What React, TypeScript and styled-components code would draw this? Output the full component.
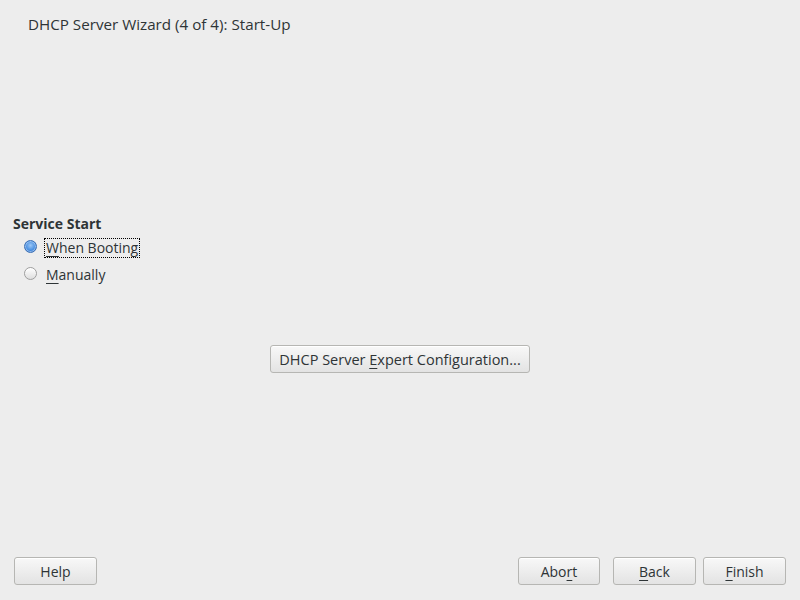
import styled, { createGlobalStyle } from 'styled-components'

const GlobalStyle = createGlobalStyle`
  html, body {
    margin: 0;
    padding: 0;
    background: #ededed;
  }
  body {
    font-family: "Open Sans", "DejaVu Sans", sans-serif;
    font-size: 14px;
    color: #2e3436;
  }
`

const Window = styled.div`
  width: 800px;
  height: 600px;
  display: flex;
  flex-direction: column;
  box-sizing: border-box;
`

const Title = styled.div`
  padding: 14px 0 0 28px;
  height: 27px;
  line-height: 20px;
  font-size: 15.2px;
`

const Main = styled.div`
  flex: 1;
  display: flex;
  flex-direction: column;
  justify-content: center;
  padding: 0 13px 11px;
`

const Frame = styled.div`
  display: flex;
  flex-direction: column;
`

const FrameLabel = styled.div`
  font-weight: bold;
  line-height: 20px;
`

const RadioRow = styled.label`
  display: flex;
  align-items: center;
  gap: 7px;
  padding-left: 11px;
  height: 27px;
`

const RadioDot = styled.span<{ $checked?: boolean }>`
  width: 11px;
  height: 11px;
  border-radius: 50%;
  border: 1px solid ${(p) => (p.$checked ? '#3a6fb5' : '#9e9e9e')};
  background: ${(p) =>
    p.$checked
      ? 'radial-gradient(circle at 50% 40%, #9cc7f5 0%, #4a90e2 55%, #2f6fc4 100%)'
      : 'linear-gradient(#ffffff, #dedede)'};
  box-shadow: ${(p) => (p.$checked ? 'inset 0 0 0 1px rgba(255,255,255,0.4)' : 'inset 0 1px 1px #fff')};
  flex: none;
  margin-top: -2px;
`

const RadioText = styled.span<{ $focus?: boolean }>`
  padding: 0 1px;
  border: 1px dotted ${(p) => (p.$focus ? '#000' : 'transparent')};
  line-height: 18px;
`

const Key = styled.u`
  text-decoration: underline;
  text-underline-offset: 3px;
`

const Center = styled.div`
  display: flex;
  justify-content: center;
  margin-top: 57px;
`

const Button = styled.button<{ $width?: number }>`
  font-family: inherit;
  font-size: 14px;
  color: #2e3436;
  height: 28px;
  width: ${(p) => p.$width ?? 83}px;
  padding: 0 6px;
  border: 1px solid #b6b6b3;
  border-radius: 3px;
  background: linear-gradient(#f8f8f8, #e3e3e3);
  box-shadow: inset 0 1px 0 #ffffff;
  cursor: pointer;
`

const WideLabel = styled.span`
  font-size: 14.5px;
`

const Footer = styled.div`
  display: flex;
  align-items: center;
  padding: 0 14px 15px 14px;
`

const Spacer = styled.div`
  flex: 1;
`

const FooterGap = styled.div<{ $w: number }>`
  width: ${(p) => p.$w}px;
`

function App() {
  return (
    <Window>
      <GlobalStyle />
      <Title>DHCP Server Wizard (4 of 4): Start-Up</Title>
      <Main>
        <Frame>
          <FrameLabel>Service Start</FrameLabel>
          <RadioRow>
            <RadioDot $checked />
            <RadioText $focus>
              <Key>W</Key>hen Booting
            </RadioText>
          </RadioRow>
          <RadioRow>
            <RadioDot />
            <RadioText>
              <Key>M</Key>anually
            </RadioText>
          </RadioRow>
        </Frame>
        <Center>
          <Button $width={260}>
            <WideLabel>
              DHCP Server <Key>E</Key>xpert Configuration...
            </WideLabel>
          </Button>
        </Center>
      </Main>
      <Footer>
        <Button>Help</Button>
        <Spacer />
        <Button $width={82}>
          Abo<Key>r</Key>t
        </Button>
        <FooterGap $w={13} />
        <Button>
          <Key>B</Key>ack
        </Button>
        <FooterGap $w={7} />
        <Button>
          <Key>F</Key>inish
        </Button>
      </Footer>
    </Window>
  )
}

export default App
